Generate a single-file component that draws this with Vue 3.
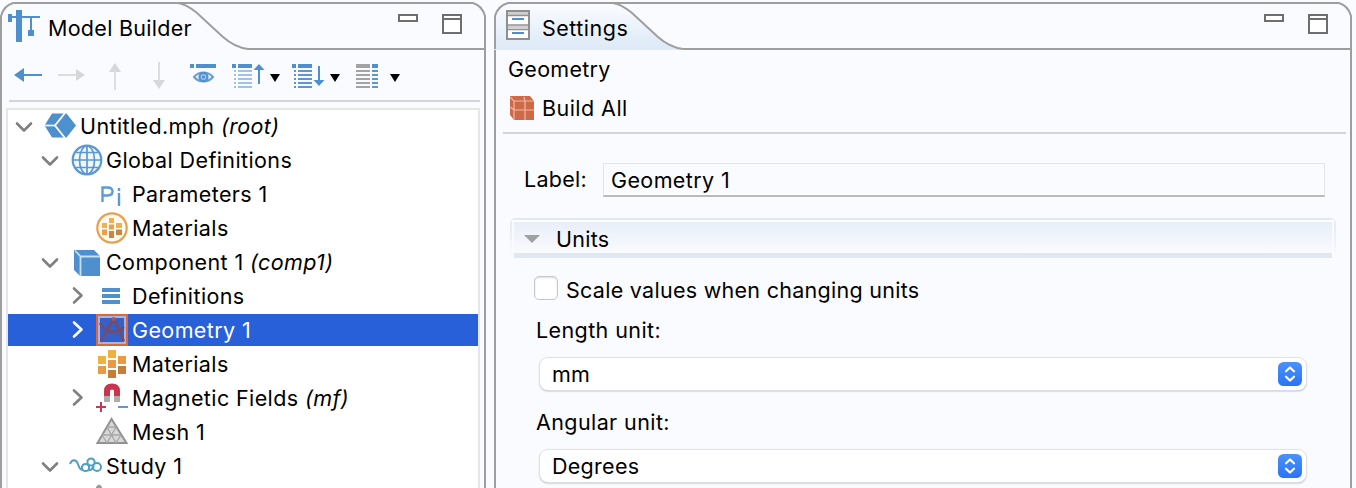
<script setup>
const tree = [
  { text: 'Untitled.mph', tag: '(root)', level: 0, arrow: 'down', icon: 'root' },
  { text: 'Global Definitions', level: 1, arrow: 'down', icon: 'globe' },
  { text: 'Parameters 1', level: 2, icon: 'param' },
  { text: 'Materials', level: 2, icon: 'gmat' },
  { text: 'Component 1', tag: '(comp1)', level: 1, arrow: 'down', icon: 'comp' },
  { text: 'Definitions', level: 2, arrow: 'right', icon: 'defs' },
  { text: 'Geometry 1', level: 2, arrow: 'right', icon: 'geom', selected: true },
  { text: 'Materials', level: 2, icon: 'mat' },
  { text: 'Magnetic Fields', tag: '(mf)', level: 2, arrow: 'right', icon: 'magnet' },
  { text: 'Mesh 1', level: 2, icon: 'mesh' },
  { text: 'Study 1', level: 1, arrow: 'down', icon: 'study' },
  { text: '', level: 2, icon: 'step' }
]
const selects = [
  { label: 'Length unit:', value: 'mm' },
  { label: 'Angular unit:', value: 'Degrees' }
]
</script>

<template>
  <div class="app">
    <section class="panel builder">
      <header class="head">
        <svg class="outline" width="486" height="50" viewBox="0 0 486 50">
          <path d="M1 50V16C3 9 6 5 13 3H473C480 5 483 9 485 16V50M178 3C186 4 192 9 197 13L223 37C231 44 240 48 248 49H485" fill="none" stroke="#9e9e9e" stroke-width="2" />
        </svg>
        <svg class="tabicon" width="34" height="34" viewBox="7 9 34 34" fill="#4e8fcd">
          <rect x="16" y="10" width="6" height="32" /><rect x="8" y="14" width="4" height="8" /><rect x="10" y="16" width="30" height="2" /><rect x="30" y="17" width="2" height="14" /><rect x="28" y="30" width="6" height="6" />
        </svg>
        <h1>Model Builder</h1>
        <svg class="win" width="66" height="24" viewBox="397 13 66 24" fill="#fff" stroke="#6e6e6e" stroke-width="2">
          <rect x="399" y="15" width="18" height="6" /><path d="M443 15h18v18h-18zM443 19h18" />
        </svg>
      </header>

      <div class="toolbar">
        <svg class="tool" viewBox="6 60 44 34"><path d="M14 75L24 68V82Z" fill="#4e8fcd" /><path d="M22 75H42" stroke="#4e8fcd" stroke-width="2" /></svg>
        <svg class="tool" viewBox="50 60 44 34"><path d="M85 75L76 69V81Z" fill="#d6d7d9" /><path d="M58 75H78" stroke="#dcdddf" stroke-width="2" /></svg>
        <svg class="tool" viewBox="94 60 44 34"><path d="M115 63L121 72H109Z" fill="#d6d7d9" /><path d="M115 70V90" stroke="#dcdddf" stroke-width="2" /></svg>
        <svg class="tool" viewBox="138 60 44 34"><path d="M159 89L165 80H153Z" fill="#d6d7d9" /><path d="M159 62V82" stroke="#dcdddf" stroke-width="2" /></svg>
        <svg class="tool" viewBox="182 60 44 34">
          <path d="M190 66H194M196 66H216" stroke="#4e8fcd" stroke-width="4" />
          <path d="M194 77C199 71 208 71 213 77C208 83 199 83 194 77Z" fill="#e4eef9" stroke="#6a9fd4" stroke-width="2" />
          <circle cx="203.500" cy="77" r="4" fill="#9cc0e6" stroke="#4e8fcd" stroke-width="2" /><circle cx="203.500" cy="77" r="1.500" fill="#4e8fcd" />
        </svg>
        <svg class="tool wide" viewBox="226 60 60 34">
          <path d="M232 66H236M238 66H252" stroke="#4e8fcd" stroke-width="4" />
          <path d="M234 71H236M238 71H252M234 75H236M238 75H252M234 79H236M238 79H252M234 83H236M238 83H252M234 87H236M238 87H252" stroke="#9fc2e6" stroke-width="2" />
          <path d="M259 64L264.500 70H253.500Z" fill="#4e8fcd" /><path d="M259 68V84" stroke="#4e8fcd" stroke-width="2" /><path d="M270 74H280L275 82Z" />
        </svg>
        <svg class="tool wide" viewBox="286 60 60 34">
          <path d="M292 66H296M298 66H312" stroke="#4e8fcd" stroke-width="4" />
          <path d="M294 71H296M298 71H312M294 75H296M298 75H312M294 79H296M298 79H312M294 83H296M298 83H312M294 87H296M298 87H312" stroke="#5b97d1" stroke-width="2" />
          <path d="M319 86L324.500 80H313.500Z" fill="#4e8fcd" /><path d="M319 66V82" stroke="#4e8fcd" stroke-width="2" /><path d="M330 74H340L335 82Z" />
        </svg>
        <svg class="tool wide" viewBox="346 60 60 34">
          <path d="M356 66H370" stroke="#a3a3a3" stroke-width="4" /><path d="M372 66H378" stroke="#4e8fcd" stroke-width="4" />
          <path d="M356 71H370M356 75H370M356 79H370M356 83H370M356 87H370" stroke="#a3a3a3" stroke-width="2" />
          <path d="M372 71H378M372 75H378M372 79H378M372 83H378M372 87H378" stroke="#5b97d1" stroke-width="2" />
          <path d="M390 74H400L395 82Z" />
        </svg>
      </div>

      <div class="tree">
        <div v-for="(n, i) in tree" :key="i" class="row" :class="['l' + n.level, { selected: n.selected }]">
          <svg class="chev" viewBox="0 0 24 32" fill="none" stroke-width="2.600" stroke-linecap="round" stroke-linejoin="round">
            <path v-if="n.arrow === 'down'" d="M5 13.500L12 20.500L19 13.500" />
            <path v-if="n.arrow === 'right'" d="M10 8.500L17.500 15.500L10 22.500" />
          </svg>
          <svg v-if="n.icon === 'root'" class="ico" viewBox="44 110 32 32">
            <path d="M52 113.500H66.500L76 125.500L66.500 137.500H52L44.500 125.500Z" fill="#4e8fcd" /><path d="M44 125.500H55" fill="none" stroke="#e9f2fb" stroke-width="1.800" /><path d="M65 113L55 125.500L65 138" fill="none" stroke="#fff" stroke-width="1.800" />
          </svg>
          <svg v-else-if="n.icon === 'globe'" class="ico" viewBox="70 144 32 32" fill="none" stroke="#5b97d3" stroke-width="1.700">
            <circle cx="87" cy="160" r="14.300" stroke-width="2.200" fill="#f1f7fd" /><ellipse cx="87" cy="160" rx="7.500" ry="14" /><path d="M87 146V174M73 160H101M76 152.500H98M76 167.500H98" />
          </svg>
          <svg v-else-if="n.icon === 'param'" class="ico" viewBox="96 178 32 32" fill="none" stroke="#5f9ad5" stroke-width="2.400">
            <path d="M102.500 202V187.500H107.500Q112.500 187.500 112.500 191.500T107.500 195.500H102.500M119 193V206M119 188V191" />
          </svg>
          <svg v-else-if="n.icon === 'gmat'" class="ico" viewBox="96 212 32 32">
            <circle cx="112" cy="228" r="14.700" fill="#fff9ef" stroke="#e5a14c" stroke-width="2.200" />
            <path d="M109 218H114V223H109ZM102 223H107V228H102ZM116 223H122V228H116Z" fill="#edb154" /><path d="M109 224.500H114V229.500H109ZM102 229.500H107V235H102Z" fill="#e9a047" /><path d="M109 231H114V238H109ZM116 229.500H122V235H116Z" fill="#c98640" />
          </svg>
          <svg v-else-if="n.icon === 'comp'" class="ico" viewBox="70 246 32 32">
            <path d="M74 250H94L100 256V276H80L74 270Z" fill="#4e8fcd" /><path d="M75 250.500L80.500 256.500V276M80.500 256.500H100" fill="none" stroke="#c9def3" stroke-width="1.800" />
          </svg>
          <svg v-else-if="n.icon === 'defs'" class="ico" viewBox="96 280 32 32"><path d="M102 290H120M102 296H120M102 302H120" stroke="#4e8fcd" stroke-width="3.800" /></svg>
          <svg v-else-if="n.icon === 'geom'" class="ico" viewBox="96 314 32 32">
            <rect x="97" y="315" width="30" height="30" fill="#3560c6" stroke="#e0663a" stroke-width="2" /><rect x="99" y="317" width="26" height="26" fill="none" stroke="#a3b5ea" stroke-width="2" />
            <path d="M113 319L101 342M114 319L124 341M100 323C105 333 116 335 124 327" fill="none" stroke="#7c4960" stroke-width="2.300" /><circle cx="113.500" cy="319" r="2" fill="#ad5651" />
          </svg>
          <svg v-else-if="n.icon === 'mat'" class="ico" viewBox="96 348 32 32">
            <path d="M108 350H116V358H108ZM98 356H106V364H98Z" fill="#f0b23f" /><path d="M118 356H126V364H118ZM108 360H116V368H108ZM98 366H106V374H98Z" fill="#e99a43" /><path d="M118 366H126V374H118ZM108 370H116V378H108Z" fill="#c67f34" />
          </svg>
          <svg v-else-if="n.icon === 'magnet'" class="ico" viewBox="96 382 32 32">
            <path d="M107 397V391Q107 386.500 112 386.500T117 391V397" fill="none" stroke="#c9344f" stroke-width="6" /><path d="M104 396H110V402H104ZM114 396H120V402H114Z" fill="#adadad" /><path d="M96 407H106M101 402V412" stroke="#cb3653" stroke-width="2" /><path d="M118 407H128" stroke="#5b97d1" stroke-width="2" />
          </svg>
          <svg v-else-if="n.icon === 'mesh'" class="ico" viewBox="96 416 32 32">
            <path d="M111.500 419L97.500 443H126.500Z" fill="#d8d8d8" stroke="#929292" stroke-width="2" /><path d="M107 427H116M102 435H121M107 427L116 443M116 427L107 443M102 435L107 443M121 435L116 443" fill="none" stroke="#a7a7a7" stroke-width="1.400" />
          </svg>
          <svg v-else-if="n.icon === 'study'" class="ico" viewBox="70 450 32 32" fill="none" stroke="#519fbd" stroke-width="2">
            <path d="M70 464C72 459 76 459 78 464C79 468 81 470 83 470" /><circle cx="85.500" cy="467.500" r="3.600" /><circle cx="91" cy="462" r="3.600" /><circle cx="97" cy="467" r="4" /><path d="M88 470C91 471 92 469 94 466" />
          </svg>
          <svg v-else class="ico" viewBox="96 484 32 32"><path d="M96 487Q99 482 102 487V489H96Z" fill="#999" /></svg>
          <span class="name">{{ n.text }} <i v-if="n.tag">{{ n.tag }}</i></span>
        </div>
      </div>
    </section>

    <section class="panel settings">
      <header class="head">
        <svg class="outline" width="858" height="50" viewBox="494 0 858 50">
          <defs><linearGradient id="tab" x1="0" y1="0" x2="0" y2="1"><stop offset="0" stop-color="#fbfcff" /><stop offset="1" stop-color="#dce9f7" /></linearGradient></defs>
          <path d="M495 50V16C497 9 501 5 508 3H613C621 4 627 9 632 13L658 37C666 44 675 48 683 50Z" fill="url(#tab)" />
          <path d="M495 49V16C497 9 501 5 508 3H1339C1346 5 1349 9 1351 16V50M613 3C621 4 627 9 632 13L658 37C666 44 675 48 683 49H1351" fill="none" stroke="#9e9e9e" stroke-width="2" />
        </svg>
        <svg class="tabicon" width="34" height="34" viewBox="501 9 34 34">
          <rect x="507" y="11" width="22" height="28" fill="#fff" stroke="#8f8f8f" stroke-width="2" /><path d="M508 13.500H528M508 27H528" stroke="#cfcfcf" stroke-width="3" /><path d="M508 15.500H528M508 25H528M508 29.500H528" stroke="#929292" stroke-width="1.500" /><path d="M512 19H524M512 33H524" stroke="#4e8fcd" stroke-width="2" />
        </svg>
        <h1>Settings</h1>
        <svg class="win" width="66" height="24" viewBox="1263 13 66 24" fill="#fff" stroke="#6e6e6e" stroke-width="2">
          <rect x="1265" y="15" width="18" height="6" /><path d="M1309 15h18v18h-18zM1309 19h18" />
        </svg>
      </header>

      <div class="subject">Geometry</div>
      <div class="build">
        <svg width="26" height="26" viewBox="509 95 26 26">
          <path d="M510 96H530L534 101V120H514L510 115Z" fill="#cf6a49" /><path d="M510 97L514 101H534M514 101V120M524 97L525 101V120M510 107L514 110H534" fill="none" stroke="#f0b7a4" stroke-width="1.200" />
        </svg>
        <span>Build All</span>
      </div>

      <div class="labelrow"><span>Label:</span><div class="input">Geometry 1</div></div>

      <div class="section">
        <div class="bar"><svg width="16" height="10" viewBox="0 0 16 10"><path d="M0 1H16L8 9Z" fill="#a0a0a0" /></svg><span>Units</span></div>
      </div>
      <div class="check"><span class="box"></span><span>Scale values when changing units</span></div>
      <div v-for="s in selects" :key="s.label" class="field">
        <div class="caption">{{ s.label }}</div>
        <div class="select">
          <span>{{ s.value }}</span>
          <svg width="24" height="24" viewBox="0 0 24 24">
            <defs><linearGradient id="knob" x1="0" y1="0" x2="0" y2="1"><stop offset="0" stop-color="#4a92fa" /><stop offset="1" stop-color="#2b73f5" /></linearGradient></defs>
            <rect width="24" height="24" rx="5.500" fill="url(#knob)" /><path d="M8 9.300L12 5.500L16 9.300M8 14.700L12 18.500L16 14.700" fill="none" stroke="#fff" stroke-width="2.200" stroke-linecap="round" stroke-linejoin="round" />
          </svg>
        </div>
      </div>
    </section>
  </div>
</template>

<style>
body { background: #fafbfe; }
</style>
<style scoped>
* { box-sizing: border-box; }
.app { width: 1356px; height: 488px; overflow: hidden; display: flex; gap: 8px; background: #fafbfe; color: #000; font: 21.5px/32px Inter, "Liberation Sans", sans-serif; letter-spacing: 0.28px; white-space: pre; }
svg { display: block; flex: none; }
.panel { height: 488px; flex: none; }
.builder { width: 486px; }
.settings { width: 858px; display: flex; flex-direction: column; background: linear-gradient(#9e9e9e, #9e9e9e) 0 50px / 2px 438px no-repeat, linear-gradient(#9e9e9e, #9e9e9e) 856px 50px / 2px 438px no-repeat; }
.settings > * { flex: none; }
.head { position: relative; height: 50px; display: flex; align-items: flex-start; padding: 9px 23px 0 7px; }
.outline { position: absolute; left: 0; top: 0; }
.tabicon, .win, h1 { position: relative; }
h1 { margin: 3px 0 0 7px; font: inherit; flex: 1; }
.settings h1 { letter-spacing: 0.5px; }
.win { margin-top: 4px; }
.toolbar { display: flex; height: 52px; padding: 10px 0 0 4px; border-left: 2px solid #9e9e9e; border-right: 2px solid #9e9e9e; background: linear-gradient(#d3d5d8, #d3d5d8) 7px 50px / 471px 2px no-repeat; }
.tool { width: 44px; height: 34px; }
.tool.wide { width: 60px; }
.tree { height: 386px; overflow: hidden; border-left: 2px solid #9e9e9e; border-right: 2px solid #9e9e9e; padding: 8px 6px 0 6px; display: flex; flex-direction: column; gap: 2px; letter-spacing: 0.39px; background: linear-gradient(#fff, #fff) 6px 8px / 470px 378px no-repeat, linear-gradient(#e5e6e8, #e5e6e8) 4px 6px / 474px 380px no-repeat; }
.row { height: 32px; flex: none; display: flex; align-items: center; }
.l0 { padding-left: 4px; }
.l1 { padding-left: 30px; }
.l2 { padding-left: 56px; }
.chev { width: 24px; height: 32px; stroke: #808080; margin-right: 8px; }
.ico { width: 32px; height: 32px; margin-right: 4px; overflow: visible; }
.selected { background: #2860da; color: #fff; }
.selected .chev { stroke: #fff; }
.subject { height: 36px; padding: 3px 0 0 14px; }
.build { display: flex; height: 48px; align-items: center; gap: 7px; padding: 0 0 4px 15px; margin-right: 6px; letter-spacing: 0.45px; background: linear-gradient(#d3d5d8, #d3d5d8) 9px 46px / 843px 2px no-repeat; }
.labelrow { display: flex; height: 84px; padding: 29px 27px 0 30px; justify-content: space-between; }
.input { width: 722px; height: 34px; padding: 0 7px; letter-spacing: 0.39px; border: 1px solid #e2e3e6; border-bottom: 2px solid #b9babc; background: #fafbfe; box-shadow: inset -1px -2px #fff; }
.section { height: 58px; padding: 0 16px; }
.bar { height: 40px; border-radius: 6px 6px 0 0; padding: 2px 14px 0; display: flex; align-items: center; gap: 16px; background: linear-gradient(#dfe7f2, #dfe7f2) 4px 35px / 818px 5px no-repeat, linear-gradient(#e8eef8, #fafbfe) 4px 4px / 818px 31px no-repeat, linear-gradient(#fff, #fff) 2px 2px / 822px 2px no-repeat, linear-gradient(#e0e9f5, #e0e9f5) 0 0 / 100% 2px no-repeat, linear-gradient(#e0e9f5, #fafbfe) 0 0 / 2px 100% no-repeat, linear-gradient(#e0e9f5, #fafbfe) 100% 0 / 2px 100% no-repeat; }
.check { display: flex; gap: 8px; height: 38px; padding-left: 40px; }
.box { width: 24px; height: 24px; border: 1px solid #c6c7c9; border-radius: 5px; background: #fff; box-shadow: inset 0 1px 2px #ddd; }
.check span + span { margin-top: -2px; }
.field { height: 92px; padding: 0 44px 0 42px; }
.caption { height: 44px; letter-spacing: 0.4px; }
.select { height: 32px; margin: 0 2px 0 4px; display: flex; align-items: center; justify-content: space-between; padding: 0 4px 0 12px; border-radius: 8px; background: #fff; box-shadow: 0 0 1px 1px #e1e2e5, 0 1px 2px #909090; }
</style>
